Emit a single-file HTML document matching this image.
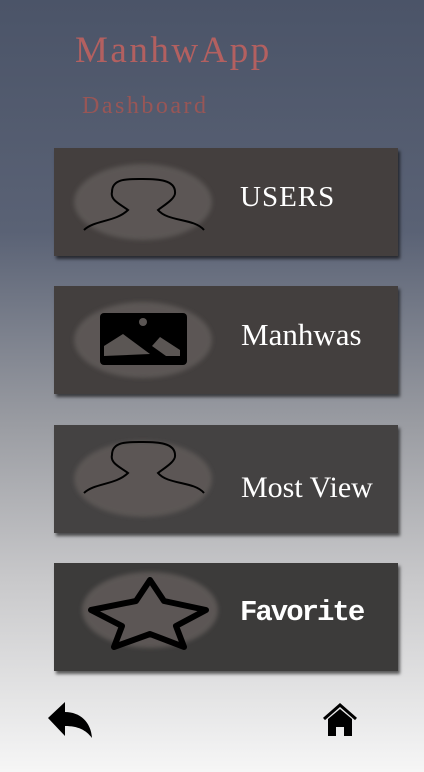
<!DOCTYPE html>
<html><head><meta charset="utf-8"><style>
*{margin:0;padding:0;box-sizing:border-box}
body{width:424px;height:772px;overflow:hidden;position:relative;background:linear-gradient(#4b5468 0%,#5a6275 30%,#9a9ca2 55%,#c8c8ca 75%,#f6f6f6 100%);font-family:"Liberation Serif",serif}
.t{position:absolute;color:#b36060}
.card{position:absolute;left:54px;width:344px;height:108px;box-shadow:2px 3px 3px rgba(0,0,0,.6)}
.card svg{position:absolute;left:0;top:0}
.lbl{position:absolute;color:#fff;font-size:30px}
</style></head><body>
<div class="t" style="left:75px;top:29px;font-size:37px;letter-spacing:2.5px">ManhwApp</div>
<div class="t" style="left:82px;top:93px;font-size:24px;letter-spacing:2.5px;color:#985656">Dashboard</div>

<div class="card" style="top:148px;background:#443f3e">
<svg width="344" height="108"><defs><filter id="b"><feGaussianBlur stdDeviation="2"/></filter></defs>
<ellipse cx="89" cy="54" rx="69" ry="38" fill="#5b5654" filter="url(#b)"/>
<path d="M30,82 C40,72 62,74 74,62 C66,56 56,52 58,44 C58,30 74,31 89,31 C104,31 121,32 121,44 C122,50 112,56 104,62 C114,74 140,70 150,82" fill="none" stroke="#000" stroke-width="2"/></svg>
<div class="lbl" style="left:186px;top:33px;font-size:29px;letter-spacing:1px">USERS</div></div>

<div class="card" style="top:286px;background:#433f3e">
<svg width="344" height="108"><ellipse cx="89" cy="54" rx="69" ry="38" fill="#5b5654" filter="url(#b)"/>
<rect x="46" y="27" width="87" height="52" rx="4" fill="#000"/>
<circle cx="89" cy="36" r="4" fill="#5b5654"/>
<path d="M50,70 L50,60 L69,48 L96,68 Z" fill="#5b5654"/>
<path d="M98,60 L106,51 L126,64 L126,70 L112,70 Z" fill="#5b5654"/></svg>
<div class="lbl" style="left:187px;top:31px;font-size:31px">Manhwas</div></div>

<div class="card" style="top:425px;background:#444242">
<svg width="344" height="108"><ellipse cx="89" cy="54" rx="69" ry="38" fill="#5b5654" filter="url(#b)"/>
<path d="M30,68 C40,58 62,60 74,48 C66,42 56,38 58,30 C58,16 74,17 89,17 C104,17 121,18 121,30 C122,36 112,42 104,48 C114,60 140,56 150,68" fill="none" stroke="#000" stroke-width="2"/></svg>
<div class="lbl" style="left:187px;top:46px;font-size:30px">Most View</div></div>

<div class="card" style="top:563px;background:#3c3b3a">
<svg width="344" height="108"><ellipse cx="96" cy="47" rx="68" ry="38" fill="#5b5654" filter="url(#b)"/>
<path d="M96,17 L110,38 L152,47 L122,63 L130,84 L96,71 L60,84 L68,63 L37,47 L82,38 Z" fill="none" stroke="#000" stroke-width="6" stroke-linejoin="round"/></svg>
<div class="lbl" style="left:186px;top:33px;font-family:'Liberation Mono',monospace;font-weight:bold;font-size:29px;letter-spacing:-2px">Favorite</div></div>

<svg style="position:absolute;left:48px;top:700px" width="46" height="40" viewBox="0 0 46 40">
<path d="M0,18 L17,2 L17,12 C32,12 43,22 44,38 C38,30 30,26 17,26 L17,36 Z" fill="#000"/></svg>
<svg style="position:absolute;left:322px;top:703px" width="36" height="34" viewBox="0 0 36 34">
<path d="M2,16 L18,2 L34,16" fill="none" stroke="#000" stroke-width="3"/>
<path d="M6,16 L18,6 L30,16 L30,33 L22,33 L22,24 L14,24 L14,33 L6,33 Z" fill="#000"/></svg>
</body></html>
